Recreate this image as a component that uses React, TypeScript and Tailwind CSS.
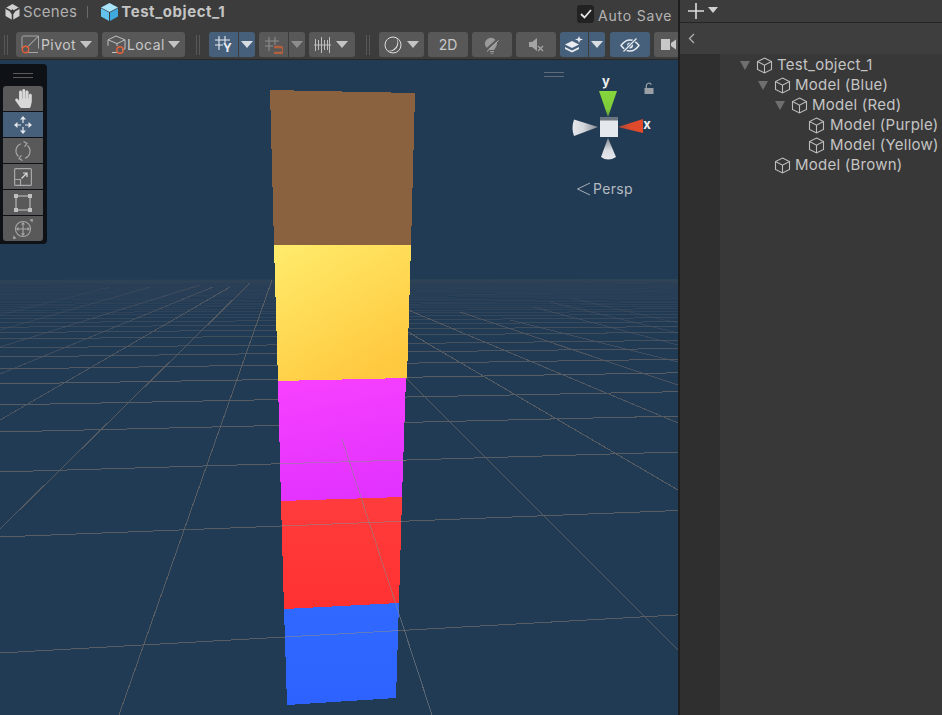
import React from "react";
import { FaHandPaper } from "react-icons/fa";

const font = { fontFamily: "Inter, 'Noto Sans', sans-serif" };

const Caret = ({ c = "#c4c4c4" }: { c?: string }) => (
  <svg width="12" height="7" viewBox="0 0 12 7" className="shrink-0"><path d="M0 0h12L6 7z" fill={c} /></svg>
);

const Grip = ({ cls }: { cls: string }) => (
  <div className={`flex h-[20px] w-[4px] shrink-0 justify-between ${cls}`}>
    <div className="w-[1px] bg-[#585858]" />
    <div className="w-[1px] bg-[#585858]" />
  </div>
);

const Btn = ({ cls, children }: { cls: string; children?: React.ReactNode }) => (
  <div className={`flex h-[25px] shrink-0 items-center justify-center text-[14px] text-[#c8c8c8] ${cls}`}>{children}</div>
);

const Cube = ({ c = "#bdbdbd", cls = "" }: { c?: string; cls?: string }) => (
  <svg width="17" height="17" viewBox="0 0 17 17" className={`shrink-0 ${cls}`} fill="none" stroke={c} strokeWidth="1.1">
    <path d="M8.5 1L15.5 4.6V12.4L8.5 16L1.5 12.4V4.6Z" />
    <path d="M1.5 4.6L8.5 8.2L15.5 4.6M8.5 8.2V16" />
  </svg>
);

const TreeRow = ({ pad, gap = "mr-[4px]", open, label }: { pad: string; gap?: string; open?: boolean; label: string }) => (
  <div className={`flex h-5 items-center text-[15px] text-[#c4c4c4] ${pad}`}>
    <div className="flex w-[16px] shrink-0 items-center">
      {open && <svg width="10" height="9" viewBox="0 0 10 9"><path d="M0 0h10L5 9z" fill="#6f6f6f" /></svg>}
    </div>
    <Cube cls={gap} />
    <span className="whitespace-nowrap tracking-[0.25px]">{label}</span>
  </div>
);

const nearD = [381, 265, 200, 160, 133, 112, 97, 85, 76, 67];
const farD: number[] = [];
for (let k = 1; k < 70; k++) farD.push(1 / (0.0149 + k * 0.0016));
const HOR = 272;

const radial: [number, number, number, number, number][] = [
  [119, 715, 272, 280, 1],
  [0, 529, 250, 283, 0.95],
  [0, 420, 230, 287, 0.8],
  [0, 374, 213, 287, 0.6],
  [0, 347, 200, 285, 0.45],
  [0, 330, 150, 287, 0.3],
  [0, 315, 110, 287, 0.2],
  [406, 378, 678, 650, 1],
  [408, 332, 678, 490, 1],
  [408, 310, 678, 423, 0.9],
  [460, 312, 678, 385, 0.75],
  [510, 320, 678, 362, 0.6],
  [533, 307, 678, 345, 0.45],
  [550, 302, 678, 333, 0.35],
  [570, 298, 678, 323, 0.25],
];

const Tower = () => (
  <>
    <defs>
      <linearGradient id="gy" x1="0" y1="0" x2="0.6" y2="1"><stop offset="0" stopColor="#ffec6c" /><stop offset="1" stopColor="#ffc93f" /></linearGradient>
      <linearGradient id="gm" x1="0.3" y1="0" x2="0.5" y2="1"><stop offset="0" stopColor="#f740ff" /><stop offset="1" stopColor="#e232ff" /></linearGradient>
      <linearGradient id="gr" x1="0" y1="0" x2="0" y2="1"><stop offset="0" stopColor="#ff3c3c" /><stop offset="1" stopColor="#ff3131" /></linearGradient>
      <linearGradient id="gb" x1="0" y1="0" x2="0" y2="1"><stop offset="0" stopColor="#3069ff" /><stop offset="1" stopColor="#2e62ff" /></linearGradient>
    </defs>
    <polygon points="270,90 415,93 411,245 274,245" fill="#8b6240" />
    <polygon points="274,245 411,245 407,378 278,381" fill="url(#gy)" />
    <polygon points="278,381 406,378 402,497 281,501" fill="url(#gm)" />
    <polygon points="281,501 402,497 399,603 284,609" fill="url(#gr)" />
    <polygon points="284,609 399,603 396,698 287,705" fill="url(#gb)" />
  </>
);

const SceneDrawing = () => (
  <svg className="absolute inset-0" width="678" height="655" viewBox="0 60 678 655" shapeRendering="crispEdges">
    {[...nearD, ...farD].map((d, i) => (
      <line key={i} x1="0" y1={HOR + d} x2="678" y2={HOR + d * 0.9} stroke="#585c63" strokeOpacity={d >= 60 ? Math.min(1, d / 110) : 0.03 + (d / 60) * (d / 60) * 0.5} />
    ))}
    {radial.map(([a, b, c, d, o], i) => <line key={i} x1={a} y1={b} x2={c} y2={d} stroke="#585c63" strokeOpacity={o} />)}
    <Tower />
    <g stroke="#8a8a8a" strokeOpacity="0.55">
      <line x1="280" y1={272 + 200 - 0.1 * 200 * 280 / 678} x2="406" y2={272 + 200 - 0.1 * 200 * 406 / 678} />
      <line x1="282" y1={272 + 265 - 0.1 * 265 * 282 / 678} x2="402" y2={272 + 265 - 0.1 * 265 * 402 / 678} />
      <line x1="285" y1={272 + 381 - 0.1 * 381 * 285 / 678} x2="399" y2={272 + 381 - 0.1 * 381 * 399 / 678} />
      <line x1="342" y1="439" x2="432" y2="715" />
    </g>
  </svg>
);

const Gizmo = () => (
  <svg className="absolute left-[540px] top-0" width="138" height="150" viewBox="540 60 138 150">
    <defs>
      <linearGradient id="wl" x1="0" x2="1" y1="0" y2="0"><stop offset="0" stopColor="#e6e8ec" /><stop offset="0.45" stopColor="#d2d5da" /><stop offset="1" stopColor="#7f868e" /></linearGradient>
      <linearGradient id="wb" x1="0" x2="0" y1="0" y2="1"><stop offset="0" stopColor="#7f868e" /><stop offset="0.55" stopColor="#d8dbe0" /><stop offset="1" stopColor="#e6e8ec" /></linearGradient>
      <linearGradient id="gg" x1="0" x2="0" y1="0" y2="1"><stop offset="0" stopColor="#86d63c" /><stop offset="0.7" stopColor="#7fcb3a" /><stop offset="1" stopColor="#5f8f3e" /></linearGradient>
      <linearGradient id="rr" x1="0" x2="1" y1="0" y2="0"><stop offset="0" stopColor="#a34a38" /><stop offset="0.5" stopColor="#dd4a2c" /><stop offset="1" stopColor="#e2492a" /></linearGradient>
    </defs>
    <g stroke="#5f6b78"><line x1="544" y1="72.5" x2="564" y2="72.5" /><line x1="544" y1="76.5" x2="564" y2="76.5" /></g>
    <polygon points="599,91 617,91 608,117" fill="url(#gg)" />
    <polygon points="618,127 643,119 643,133" fill="url(#rr)" />
    <path d="M574 119.5L598 127L574 136Q571 128 574 119.5Z" fill="url(#wl)" />
    <path d="M608 138L616 157Q608 162 601 157Z" fill="url(#wb)" />
    <rect x="600" y="117" width="18" height="20" fill="#e5e8ed" />
    <rect x="600" y="117" width="18" height="3.5" fill="#6c7580" />
    <text x="606" y="86" textAnchor="middle" fontSize="13" fontWeight="700" fill="#f0f0f0" style={font}>y</text>
    <text x="647" y="129" textAnchor="middle" fontSize="13" fontWeight="700" fill="#f0f0f0" style={font}>x</text>
    <path d="M644.5 88h9v6h-9z" fill="#9aa0a6" />
    <path d="M646.3 88v-2.2a2.6 2.6 0 0 1 5-1" fill="none" stroke="#9aa0a6" strokeWidth="1.2" />
  </svg>
);

const ToolBtn = ({ cls, children }: { cls: string; children: React.ReactNode }) => (
  <div className={`flex h-[25px] w-[40px] items-center justify-center ${cls}`}>{children}</div>
);

const Palette = () => (
  <div className="absolute left-0 top-[4px] flex h-[180px] w-[47px] flex-col rounded-r-[4px] bg-[#0e1115] px-[3px]">
    <div className="flex h-[22px] shrink-0 flex-col items-center justify-center gap-[3px] pr-[2px]">
      <div className="h-[1px] w-[20px] bg-[#5a5a5a]" />
      <div className="h-[1px] w-[20px] bg-[#5a5a5a]" />
    </div>
    <div className="flex flex-col gap-[1px]">
      <ToolBtn cls="rounded-t-[3px] bg-[#595959]"><FaHandPaper size={19} color="#d8d8d8" /></ToolBtn>
      <ToolBtn cls="bg-[#46607c]">
        <svg width="20" height="20" viewBox="0 0 20 20" fill="none" stroke="#e4e8ec" strokeWidth="1.2">
          <path d="M10 3v5M10 12v5M3 10h5M12 10h5" />
          <path d="M10 1l3 3.5H7zM10 19l3-3.5H7zM1 10l3.5-3v6zM19 10l-3.5-3v6z" fill="#e4e8ec" stroke="none" />
        </svg>
      </ToolBtn>
      <ToolBtn cls="bg-[#595959]">
        <svg width="20" height="20" viewBox="0 0 20 20" fill="none" stroke="#a8a8a8" strokeWidth="1.2">
          <path d="M5.5 15.5A7.5 7.5 0 0 1 8 2.8M14.5 4.5A7.5 7.5 0 0 1 12 17.2" />
          <path d="M10.5 0.5l3.5 2-2.5 3.2M9.5 19.5l-3.5-2 2.5-3.2" />
        </svg>
      </ToolBtn>
      <ToolBtn cls="bg-[#595959]">
        <svg width="18" height="18" viewBox="0 0 18 18" fill="none" stroke="#a8a8a8" strokeWidth="1.2">
          <rect x="0.6" y="0.6" width="16.8" height="16.8" rx="1" />
          <path d="M0.6 11.5H6.5V17.4" />
          <path d="M7.5 10.5L13 5M9 5h4v4" stroke="#dcdcdc" />
        </svg>
      </ToolBtn>
      <ToolBtn cls="bg-[#595959]">
        <svg width="20" height="20" viewBox="0 0 20 20" fill="none" stroke="#c0c0c0" strokeWidth="1.1">
          <rect x="3" y="3" width="14" height="14" />
          <g fill="#c0c0c0" stroke="none"><rect x="1" y="1" width="4" height="4" /><rect x="15" y="1" width="4" height="4" /><rect x="1" y="15" width="4" height="4" /><rect x="15" y="15" width="4" height="4" /></g>
        </svg>
      </ToolBtn>
      <ToolBtn cls="rounded-b-[3px] bg-[#595959]">
        <svg width="22" height="22" viewBox="0 0 22 22" fill="none" stroke="#a8a8a8" strokeWidth="1.1">
          <circle cx="11" cy="11" r="7.5" />
          <path d="M11 6v10M6 11h10" />
          <g fill="#a8a8a8" stroke="none"><path d="M11 4l2 2.5H9zM11 18l2-2.5H9zM4 11l2.5-2v4zM18 11l-2.5-2v4z" /><path d="M1 21l3.5-.6L1.6 17.5zM21 1l-3.5.6 2.9 2.9z" /></g>
        </svg>
      </ToolBtn>
    </div>
  </div>
);

export default function App() {
  return (
    <div className="flex h-[715px] w-[942px] overflow-hidden bg-[#383838]" style={font}>
      <div className="flex w-[678px] shrink-0 flex-col">
        <div className="relative flex h-[28px] shrink-0 items-center bg-[#3c3c3c] pl-[5px]">
          <svg width="15" height="16" viewBox="0 0 15 16" className="mb-[4px] shrink-0">
            <path d="M7.5 0L14.5 4V12L7.5 16L0.5 12V4Z" fill="#d0d0d0" />
            <path d="M7.5 8L0.5 4M7.5 8L14.5 4M7.5 8V16" stroke="#3c3c3c" strokeWidth="1.6" />
            <path d="M7.5 5L10 8L7.5 11L5 8Z" fill="#3c3c3c" />
          </svg>
          <span className="mb-[4px] ml-[3px] text-[15px] tracking-[0.3px] text-[#b0b0b0]">Scenes</span>
          <div className="mb-[4px] ml-[10px] h-[12px] w-[1px] bg-[#6a6a6a]" />
          <svg width="17" height="18" viewBox="0 0 17 18" className="mb-[4px] ml-[13px] shrink-0">
            <path d="M8.5 0L17 4.5L8.5 9L0 4.5Z" fill="#a8e4fa" />
            <path d="M0 5.3L8 9.6V18L0 13.6Z" fill="#62c3ec" />
            <path d="M17 5.3L9 9.6V18L17 13.6Z" fill="#3fa9de" />
          </svg>
          <span className="mb-[4px] ml-[3px] text-[15px] font-bold tracking-[0.55px] text-[#c4c4c4]">Test_object_1</span>
          <div className="absolute left-[577px] top-[5px] flex h-[18px] w-[17px] items-center justify-center rounded-[3px] bg-[#222222]">
            <svg width="12" height="10" viewBox="0 0 12 10" fill="none" stroke="#e8e8e8" strokeWidth="1.8"><path d="M1 5l3.5 3.5L11 1" /></svg>
          </div>
          <span className="absolute left-[598px] top-[5px] text-[14px] tracking-[0.8px] text-[#b4b4b4]">Auto Save</span>
        </div>

        <div className="flex h-[32px] shrink-0 items-start overflow-hidden border-b border-[#282828] bg-[#3c3c3c] pl-[4px] pt-[4px]">
          <Grip cls="mt-[3px]" />
          <Btn cls="ml-[8px] w-[82px] justify-start rounded-[3px] bg-[#585858] pl-[5px]">
            <svg width="19" height="19" viewBox="0 0 19 19" className="shrink-0" fill="none" stroke="#c0c0c0" strokeWidth="1">
              <path d="M5 1h12.5v12.5M1 13V2.5A1.5 1.5 0 0 1 2.5 1H5M7 17.5h10" strokeOpacity="0.75" />
              <path d="M7 11.5L17 1.5" />
              <circle cx="4.5" cy="14.5" r="3.2" stroke="#e5603a" strokeWidth="1.4" />
            </svg>
            <span className="ml-[1px] mr-[4px] tracking-[0.4px]">Pivot</span>
            <Caret />
          </Btn>
          <Btn cls="ml-[4px] w-[83px] justify-start rounded-[3px] bg-[#585858] pl-[5px]">
            <svg width="19" height="19" viewBox="0 0 19 19" className="shrink-0" fill="none" stroke="#c0c0c0" strokeWidth="1">
              <path d="M9 1l9 3.8v9L15 15M1 4.8L9 1M1 4.8v6M1 4.8l9 3.8 8-3.8M10 8.6V11M5 17.5h5" />
              <circle cx="13" cy="15" r="3.2" stroke="#e5603a" strokeWidth="1.4" />
            </svg>
            <span className="ml-[1px] mr-[3px] tracking-[0.4px]">Local</span>
            <Caret />
          </Btn>
          <Grip cls="ml-[11px] mt-[3px]" />
          <Btn cls="ml-[9px] w-[29px] rounded-l-[3px] bg-[#46607c]">
            <svg width="18" height="19" viewBox="0 0 18 19" fill="none" stroke="#e8ecf0" strokeWidth="1.1" className="overflow-visible">
              <path d="M0 5h15M0 10h8M4 1v14M10 1v7" />
              <text x="12.5" y="17" textAnchor="middle" fontSize="12" fontWeight="700" fill="#e8ecf0" stroke="none" style={font}>Y</text>
            </svg>
          </Btn>
          <Btn cls="ml-[1px] w-[16px] rounded-r-[3px] bg-[#46607c]"><Caret c="#d8dde2" /></Btn>
          <Btn cls="ml-[4px] w-[29px] rounded-l-[3px] bg-[#585858]">
            <svg width="18" height="18" viewBox="0 0 18 18" fill="none" stroke="#8e8e8e" strokeWidth="1">
              <path d="M0 5h14M0 10h8M4 1v14M10 1v8" />
              <path d="M9 11h6.5a2 2 0 0 1 0 6H9" stroke="#b5603c" strokeWidth="2.4" />
            </svg>
          </Btn>
          <Btn cls="ml-[1px] w-[16px] rounded-r-[3px] bg-[#585858]"><Caret c="#8e8e8e" /></Btn>
          <Btn cls="ml-[4px] w-[46px] justify-start rounded-[3px] bg-[#585858] pl-[5px]">
            <svg width="17" height="16" viewBox="0 0 17 16" className="mr-[5px] shrink-0" fill="none" stroke="#bdbdbd" strokeWidth="1">
              <path d="M0 8h17M1.5 2v12M4.5 3v10M7.5 0v16M10.5 3v10M13.5 3v10M15.5 0v16" />
            </svg>
            <Caret />
          </Btn>
          <Grip cls="ml-[11px] mt-[3px]" />
          <Btn cls="ml-[9px] w-[45px] justify-start rounded-[3px] bg-[#585858] pl-[5px]">
            <svg width="18" height="18" viewBox="0 0 18 18" className="mr-[5px] shrink-0">
              <circle cx="9" cy="9" r="8" fill="none" stroke="#dcdcdc" strokeWidth="1" />
              <path d="M12 1.6A8 8 0 0 1 3 14.5A8.5 8.5 0 0 0 12 1.6Z" fill="#dcdcdc" />
            </svg>
            <Caret />
          </Btn>
          <Btn cls="ml-[4px] w-[40px] rounded-[3px] bg-[#585858]">2D</Btn>
          <Btn cls="ml-[4px] w-[40px] rounded-[3px] bg-[#585858]">
            <svg width="14" height="18" viewBox="0 0 14 18" fill="none">
              <path d="M3 13A6 6 0 1 1 11 11L9 14H5z" fill="#9a9a9a" />
              <path d="M5 15.5h4M5.5 17.2h3" stroke="#9a9a9a" />
              <path d="M1 14L13 3" stroke="#585858" strokeWidth="2.2" />
              <path d="M2 15.5L13.5 4.5" stroke="#b0b0b0" strokeWidth="1" />
            </svg>
          </Btn>
          <Btn cls="ml-[4px] w-[40px] rounded-[3px] bg-[#585858]">
            <svg width="15" height="16" viewBox="0 0 15 16">
              <path d="M0 5h3l5-4v13l-5-4H0z" fill="#a4a4a4" />
              <path d="M9 9l5 5M14 9l-5 5" stroke="#a4a4a4" strokeWidth="1.3" />
            </svg>
          </Btn>
          <Btn cls="ml-[4px] w-[28px] rounded-l-[3px] bg-[#46607c]">
            <svg width="18" height="17" viewBox="0 0 18 17" fill="#e8ecf0">
              <path d="M7 5L14 8.5L7 12L0 8.5Z" />
              <path d="M0 11l7 3.5 7-3.5v2L7 16.5 0 13z" />
              <path d="M14 0l1 2.6L18 3.5 15 4.5 14 7 13 4.5 10 3.5 13 2.6z" />
            </svg>
          </Btn>
          <Btn cls="ml-[1px] w-[16px] rounded-r-[3px] bg-[#46607c]"><Caret c="#d8dde2" /></Btn>
          <Btn cls="ml-[5px] w-[40px] rounded-[3px] bg-[#46607c]">
            <svg width="20" height="14" viewBox="0 0 20 14" fill="none">
              <path d="M1 7.5C4 3.5 7 2 10 2s6 1.5 9 5.5c-3 4-6 5.5-9 5.5s-6-1.5-9-5.5z" stroke="#e8ecf0" strokeWidth="1.4" />
              <circle cx="10" cy="7.5" r="3" fill="#e8ecf0" />
              <path d="M3 14L17 0" stroke="#46607c" strokeWidth="3" />
              <path d="M3.5 13.5L16.5 0.5" stroke="#e8ecf0" strokeWidth="1.3" />
            </svg>
          </Btn>
          <Btn cls="ml-[4px] w-[40px] justify-start rounded-[3px] bg-[#585858] pl-[7px]">
            <svg width="15" height="13" viewBox="0 0 15 13" fill="#c8c8c8"><path d="M0 1h9v11H0zM10 5l5-3.5v10L10 8z" /></svg>
          </Btn>
        </div>

        <div className="relative flex-1 overflow-hidden bg-[#223b55]">
          <SceneDrawing />
          <Palette />
          <Gizmo />
          <div className="absolute left-[577px] top-[118px] flex items-center gap-[2px]">
            <svg width="14" height="14" viewBox="0 0 14 14" fill="none" stroke="#a4adb6" strokeWidth="1"><path d="M13 1L0.5 7L13 13" /></svg>
            <span className="text-[14px] tracking-[0.35px] text-[#b4bac0]">Persp</span>
          </div>
        </div>
      </div>

      <div className="w-[2px] shrink-0 bg-[#1e1e1e]" />

      <div className="flex min-w-0 flex-1 flex-col">
        <div className="flex h-[23px] shrink-0 items-center border-b border-[#242424] bg-[#3c3c3c] pl-[8px]">
          <svg width="16" height="16" viewBox="0 0 16 16" stroke="#dcdcdc" strokeWidth="1.6"><path d="M8 0v16M0 8h16" /></svg>
          <svg width="10" height="6" viewBox="0 0 10 6" className="mb-[3px] ml-[4px]"><path d="M0 0h10L5 6z" fill="#d0d0d0" /></svg>
        </div>
        <div className="flex h-[31px] shrink-0 items-center bg-[#3e3e3e] pl-[8px]">
          <svg width="7" height="11" viewBox="0 0 7 11" fill="none" stroke="#b0b0b0" strokeWidth="1.3"><path d="M6 1L1.5 5.5L6 10" /></svg>
        </div>
        <div className="flex flex-1">
          <div className="w-[40px] shrink-0 bg-[#2f2f2f]" />
          <div className="flex-1 bg-[#383838] pt-[1px]">
            <TreeRow pad="pl-[20px]" open label="Test_object_1" />
            <TreeRow pad="pl-[38px]" open label="Model (Blue)" />
            <TreeRow pad="pl-[55px]" open label="Model (Red)" />
            <TreeRow pad="pl-[72px]" label="Model (Purple)" gap="mr-[5px]" />
            <TreeRow pad="pl-[72px]" label="Model (Yellow)" gap="mr-[5px]" />
            <TreeRow pad="pl-[38px]" label="Model (Brown)" />
          </div>
        </div>
      </div>
    </div>
  );
}
